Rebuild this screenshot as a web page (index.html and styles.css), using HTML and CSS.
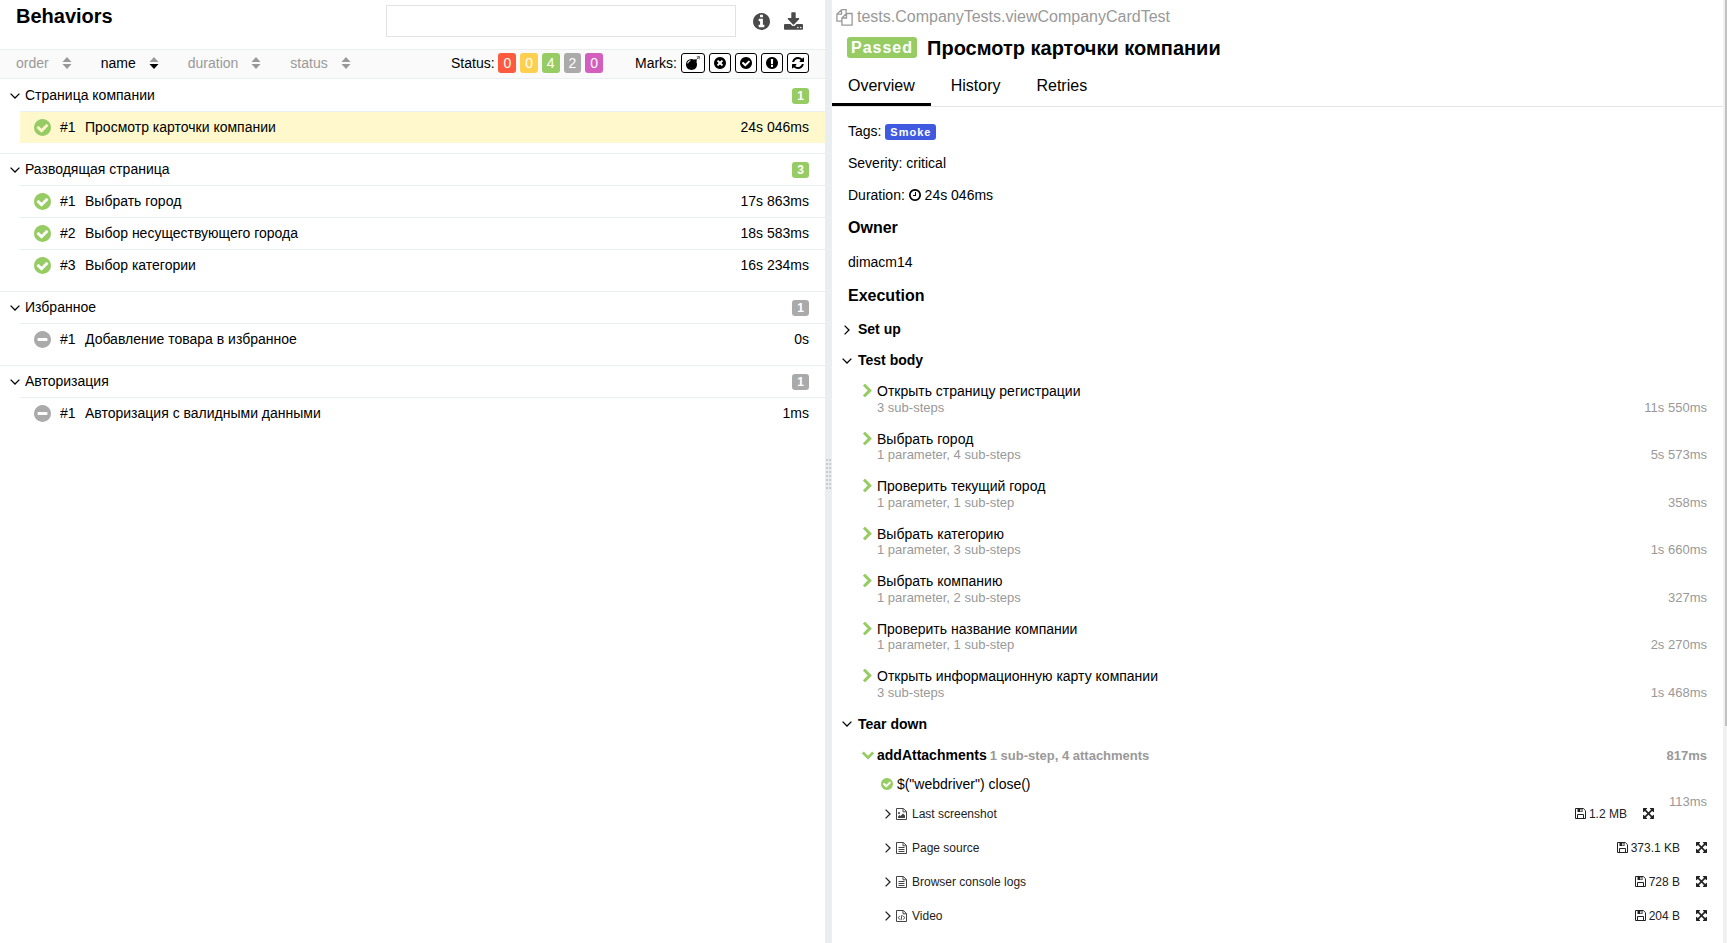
FILE: index.html
```
<!DOCTYPE html>
<html lang="ru">
<head>
<meta charset="utf-8">
<title>Behaviors</title>
<link rel="stylesheet" href="styles.css">
</head>
<body>
<svg class="sprite" aria-hidden="true">
  <symbol id="check" viewBox="128 128 1536 1536"><path d="M1412 734q0-28-18-46l-91-90q-19-19-45-19t-45 19l-408 407-226-226q-19-19-45-19t-45 19l-91 90q-18 18-18 46 0 27 18 45l362 362q19 19 45 19 27 0 46-19l543-543q18-18 18-45zm252 162q0 209-103 385.5t-279.5 279.5-385.5 103-385.5-103-279.5-279.5-103-385.5 103-385.5 279.5-279.5 385.5-103 385.5 103 279.5 279.5 103 385.5z"/></symbol>
  <symbol id="cross" viewBox="128 128 1536 1536"><path d="M1277 1122q0-26-19-45l-181-181 181-181q19-19 19-45 0-27-19-46l-90-90q-19-19-46-19-26 0-45 19l-181 181-181-181q-19-19-45-19-27 0-46 19l-90 90q-19 19-19 46 0 26 19 45l181 181-181 181q-19 19-19 45 0 27 19 46l90 90q19 19 46 19 26 0 45-19l181-181 181 181q19 19 45 19 27 0 46-19l90-90q19-19 19-46zm387-226q0 209-103 385.5t-279.5 279.5-385.5 103-385.5-103-279.5-279.5-103-385.5 103-385.5 279.5-279.5 385.5-103 385.5 103 279.5 279.5 103 385.5z"/></symbol>
  <symbol id="minus" viewBox="128 128 1536 1536"><path d="M1344 960v-128q0-26-19-45t-45-19h-768q-26 0-45 19t-19 45v128q0 26 19 45t45 19h768q26 0 45-19t19-45zm320-64q0 209-103 385.5t-279.5 279.5-385.5 103-385.5-103-279.5-279.5-103-385.5 103-385.5 279.5-279.5 385.5-103 385.5 103 279.5 279.5 103 385.5z"/></symbol>
  <symbol id="exclaim" viewBox="128 128 1536 1536"><path d="M896 128q209 0 385.5 103t279.5 279.5 103 385.5-103 385.5-279.5 279.5-385.5 103-385.5-103-279.5-279.5-103-385.5 103-385.5 279.5-279.5 385.5-103zm128 1247v-190q0-14-9-23.5t-22-9.5h-192q-13 0-23 10t-10 23v190q0 13 10 23t23 10h192q13 0 22-9.5t9-23.5zm-2-344l18-621q0-12-10-18-10-8-24-8h-220q-14 0-24 8-10 6-10 18l17 621q0 10 10 17.5t24 7.5h185q14 0 23.5-7.5t10.5-17.5z"/></symbol>
  <symbol id="info" viewBox="128 128 1536 1536"><path d="M1152 1376v-160q0-14-9-23t-23-9h-96v-512q0-14-9-23t-23-9h-320q-14 0-23 9t-9 23v160q0 14 9 23t23 9h96v320h-96q-14 0-23 9t-9 23v160q0 14 9 23t23 9h448q14 0 23-9t9-23zm-128-896v-160q0-14-9-23t-23-9h-192q-14 0-23 9t-9 23v160q0 14 9 23t23 9h192q14 0 23-9t9-23zm640 416q0 209-103 385.5t-279.5 279.5-385.5 103-385.5-103-279.5-279.5-103-385.5 103-385.5 279.5-279.5 385.5-103 385.5 103 279.5 279.5 103 385.5z"/></symbol>
  <symbol id="download" viewBox="64 0 1664 1536"><path d="M1344 1344q0-26-19-45t-45-19-45 19-19 45 19 45 45 19 45-19 19-45zm256 0q0-26-19-45t-45-19-45 19-19 45 19 45 45 19 45-19 19-45zm128-224v320q0 40-28 68t-68 28h-1472q-40 0-68-28t-28-68v-320q0-40 28-68t68-28h465l135 136q58 56 136 56t136-56l136-136h464q40 0 68 28t28 68zm-325-569q17 41-14 70l-448 448q-18 19-45 19t-45-19l-448-448q-31-29-14-70 17-39 59-39h256v-448q0-26 19-45t45-19h256q26 0 45 19t19 45v448h256q42 0 59 39z"/></symbol>
  <symbol id="refresh" viewBox="128 128 1536 1536"><path d="M1639 1056q0 5-1 7-64 268-268 434.500t-478 166.500q-146 0-282.500-55t-243.500-157l-129 129q-19 19-45 19t-45-19-19-45v-448q0-26 19-45t45-19h448q26 0 45 19t19 45-19 45l-137 137q71 66 161 102t187 36q134 0 250-65t186-179q11-17 53-117 8-23 30-23h192q13 0 22.500 9.500t9.500 22.500zm25-800v448q0 26-19 45t-45 19h-448q-26 0-45-19t-19-45 19-45l138-138q-148-137-349-137-134 0-250 65t-186 179q-11 17-53 117-8 23-30 23h-199q-13 0-22.500-9.500t-9.500-22.500v-7q65-268 270-434.500t480-166.500q146 0 284 55.500t245 156.500l130-129q19-19 45-19t45 19 19 45z"/></symbol>
  <symbol id="bomb" viewBox="0 0 1792 1792"><path d="M571 589q-10-25-34-35t-49 0q-108 44-191 127t-127 191q-10 25 0 49t35 34q13 5 24 5 42 0 60-40 34-84 98.500-148.500t148.500-98.500q25-11 35-35t0-49zm942-356l46 46-244 243 68 68q19 19 19 45.500t-19 45.500l-64 64q89 161 89 343 0 143-55.500 273.500t-150 225-225 150-273.500 55.500-273.500-55.500-225-150-150-225-55.500-273.500 55.500-273.500 150-225 225-150 273.500-55.500q182 0 343 89l64-64q19-19 45.500-19t45.500 19l68 68zm8-56q-10 10-22 10-13 0-23-10l-91-90q-9-10-9-23t9-23q10-9 23-9t23 9l90 91q10 9 10 22.500t-10 22.500zm230 230q-11 9-23 9t-23-9l-90-91q-10-9-10-22.500t10-22.500q9-10 22.500-10t22.500 10l91 90q9 10 9 23t-9 23zm41-183q0 14-9 23t-23 9h-96q-14 0-23-9t-9-23 9-23 23-9h96q14 0 23 9t9 23zm-192-192v96q0 14-9 23t-23 9-23-9-9-23v-96q0-14 9-23t23-9 23 9 9 23zm151 55l-91 90q-10 10-22 10-13 0-23-10-10-9-10-22.500t10-22.500l90-91q10-9 23-9t23 9q9 10 9 23t-9 23z"/></symbol>
  <symbol id="clock" viewBox="128 128 1536 1536"><path d="M1024 544v448q0 14-9 23t-23 9h-320q-14 0-23-9t-9-23v-64q0-14 9-23t23-9h224v-352q0-14 9-23t23-9h64q14 0 23 9t9 23zm416 352q0-148-73-273t-198-198-273-73-273 73-198 198-73 273 73 273 198 198 273 73 273-73 198-198 73-273zm224 0q0 209-103 385.500t-279.500 279.500-385.500 103-385.500-103-279.500-279.500-103-385.500 103-385.500 279.500-279.500 385.500-103 385.500 103 279.500 279.500 103 385.500z"/></symbol>
  <symbol id="chevron-right" viewBox="346 100 1060 1560"><path d="M1363 877l-742 742q-19 19-45 19t-45-19l-166-166q-19-19-19-45t19-45l531-531-531-531q-19-19-19-45t19-45l166-166q19-19 45-19t45 19l742 742q19 19 19 45t-19 45z" transform="translate(0 48)"/></symbol>
  <symbol id="chevron-down" viewBox="90 460 1612 1160"><path d="M1683 808l-742 741q-19 19-45 19t-45-19l-742-741q-19-19-19-45.500t19-45.500l166-165q19-19 45-19t45 19l531 531 531-531q19-19 45-19t45 19l166 165q19 19 19 45.500t-19 45.500z"/></symbol>
  <symbol id="expand" viewBox="128 128 1536 1536"><path d="M1411 541l-355 355 355 355 144-144q29-31 70-14 39 17 39 59v448q0 26-19 45t-45 19h-448q-42 0-59-40-17-39 14-69l144-144-355-355-355 355 144 144q31 30 14 69-17 40-59 40h-448q-26 0-45-19t-19-45v-448q0-42 40-59 39-17 69 14l144 144 355-355-355-355-144 144q-19 19-45 19-12 0-24-5-40-17-40-59v-448q0-26 19-45t45-19h448q42 0 59 40 17 39-14 69l-144 144 355 355 355-355-144-144q-31-30-14-69 17-40 59-40h448q26 0 45 19t19 45v448q0 42-39 59-13 5-25 5-26 0-45-19z"/></symbol>
  <symbol id="angle-down" viewBox="0 0 10 6"><path class="line" d="M.6.6 5 5 9.400.6"/></symbol>
  <symbol id="angle-right" viewBox="0 0 6 10"><path class="line" d="M.6.6 5 5 .6 9.400"/></symbol>
  <symbol id="sort-up" viewBox="0 0 10 12"><path d="M5 0 9.500 5h-9z"/></symbol>
  <symbol id="sort-down" viewBox="0 0 10 12"><path d="M5 12 .5 7h9z"/></symbol>
  <symbol id="copy" viewBox="0 0 17 17"><path class="line" d="M5.500.7h4.600v3M5.500.7v4.400H.9v7h4.800M5.500.7.9 5.100M10.500 4.500h5.600v11.600H5.900V9zM10.500 4.500V9H5.900"/></symbol>
  <symbol id="floppy" viewBox="0 0 11 11"><path class="thin" d="M.5.5h7.800l2.200 2.200v7.800H.5zM2.500 10.500v-4h6v4"/><path d="M2.500.5h5v3.600h-5zm2.700.7v2.200h1.400V1.200z"/></symbol>
  <symbol id="file-image" viewBox="0 0 11 12"><path class="thin" d="M.5.5h6.800l3.200 3v8H.5zM7 .5v3.300h3.500"/><path d="M2 10V8.500L3.500 7l1 1 2.500-2.500 2 2V10z"/><circle cx="3" cy="5" r="1.100"/></symbol>
  <symbol id="file-text" viewBox="0 0 11 12"><path class="thin" d="M.5.5h6.800l3.200 3v8H.5zM7 .5v3.300h3.500M2.500 5.500h6M2.500 7.500h6M2.500 9.500h6"/></symbol>
  <symbol id="file-code" viewBox="0 0 11 12"><path class="thin" d="M.5.5h6.800l3.200 3v8H.5zM7 .5v3.300h3.500M3.800 5.800 2.300 7.700l1.500 1.900M7.200 5.800l1.500 1.900-1.500 1.900M6 5 5 10.200"/></symbol>
</svg>
<div class="app">
  <section class="tree">
    <header class="tree-head">
      <h1 class="tree-title">Behaviors</h1>
      <input class="search" type="search" aria-label="Search">
      <button class="tool" aria-label="Info"><svg class="i17"><use href="#info"/></svg></button>
      <button class="tool" aria-label="Download"><svg class="i-download"><use href="#download"/></svg></button>
    </header>
    <div class="controls">
      <div class="sorters">
        <button class="sorter">order<svg class="i-sort"><use href="#sort-up"/><use href="#sort-down"/></svg></button>
        <button class="sorter sorter-on">name<svg class="i-sort"><use class="muted" href="#sort-up"/><use href="#sort-down"/></svg></button>
        <button class="sorter">duration<svg class="i-sort"><use href="#sort-up"/><use href="#sort-down"/></svg></button>
        <button class="sorter">status<svg class="i-sort"><use href="#sort-up"/><use href="#sort-down"/></svg></button>
      </div>
      <div class="statuses">Status:
        <button class="count failed">0</button>
        <button class="count broken">0</button>
        <button class="count passed">4</button>
        <button class="count skipped">2</button>
        <button class="count unknown">0</button>
      </div>
      <div class="marks"><span>Marks:</span>
        <button class="mark mark-wide" aria-label="Flaky"><svg class="i14"><use href="#bomb"/></svg></button>
        <button class="mark" aria-label="New failed"><svg class="i12"><use href="#cross"/></svg></button>
        <button class="mark" aria-label="New passed"><svg class="i12"><use href="#check"/></svg></button>
        <button class="mark" aria-label="New broken"><svg class="i12"><use href="#exclaim"/></svg></button>
        <button class="mark" aria-label="Retries status change"><svg class="i12"><use href="#refresh"/></svg></button>
      </div>
    </div>
    <div class="groups">
      <div class="group">
        <div class="group-head"><svg class="i-down"><use href="#angle-down"/></svg><span class="grow">Страница компании</span><span class="badge passed">1</span></div>
        <div class="leaf leaf-on"><svg class="i17 ok"><use href="#check"/></svg><span class="num">#1</span><span class="grow">Просмотр карточки компании</span><span>24s 046ms</span></div>
      </div>
      <div class="group">
        <div class="group-head"><svg class="i-down"><use href="#angle-down"/></svg><span class="grow">Разводящая страница</span><span class="badge passed">3</span></div>
        <div class="leaf"><svg class="i17 ok"><use href="#check"/></svg><span class="num">#1</span><span class="grow">Выбрать город</span><span>17s 863ms</span></div>
        <div class="leaf"><svg class="i17 ok"><use href="#check"/></svg><span class="num">#2</span><span class="grow">Выбор несуществующего города</span><span>18s 583ms</span></div>
        <div class="leaf"><svg class="i17 ok"><use href="#check"/></svg><span class="num">#3</span><span class="grow">Выбор категории</span><span>16s 234ms</span></div>
      </div>
      <div class="group">
        <div class="group-head"><svg class="i-down"><use href="#angle-down"/></svg><span class="grow">Избранное</span><span class="badge skipped">1</span></div>
        <div class="leaf"><svg class="i17 skip"><use href="#minus"/></svg><span class="num">#1</span><span class="grow">Добавление товара в избранное</span><span>0s</span></div>
      </div>
      <div class="group">
        <div class="group-head"><svg class="i-down"><use href="#angle-down"/></svg><span class="grow">Авторизация</span><span class="badge skipped">1</span></div>
        <div class="leaf"><svg class="i17 skip"><use href="#minus"/></svg><span class="num">#1</span><span class="grow">Авторизация с валидными данными</span><span>1ms</span></div>
      </div>
    </div>
  </section>
  <div class="gutter"><div class="grip"></div></div>
  <section class="detail">
    <div class="detail-main">
      <div class="path"><svg class="i17"><use href="#copy"/></svg><span>tests.CompanyTests.viewCompanyCardTest</span></div>
      <h2 class="case-title"><span class="label label-big passed">Passed</span><span>Просмотр карточки компании</span></h2>
      <nav class="tabs">
        <a class="tab tab-on" href="#overview">Overview</a>
        <a class="tab" href="#history">History</a>
        <a class="tab" href="#retries">Retries</a>
      </nav>
      <div class="overview" id="overview">
        <div class="fact">Tags: <span class="label tag">Smoke</span></div>
        <div class="fact">Severity: critical</div>
        <div class="fact">Duration: <svg class="i12 inline"><use href="#clock"/></svg> 24s 046ms</div>
        <h3 class="heading">Owner</h3>
        <div class="owner">dimacm14</div>
        <h3 class="heading">Execution</h3>
        <div class="stages">
          <div class="stage"><span class="stage-icon"><svg class="i-right"><use href="#angle-right"/></svg></span>Set up</div>
          <div class="stage"><span class="stage-icon"><svg class="i-down"><use href="#angle-down"/></svg></span>Test body</div>
          <div class="step"><svg class="i-chev ok"><use href="#chevron-right"/></svg><div class="grow"><div class="step-name">Открыть страницу регистрации</div><div class="meta"><span>3 sub-steps</span><span>11s 550ms</span></div></div></div>
          <div class="step"><svg class="i-chev ok"><use href="#chevron-right"/></svg><div class="grow"><div class="step-name">Выбрать город</div><div class="meta"><span>1 parameter, 4 sub-steps</span><span>5s 573ms</span></div></div></div>
          <div class="step"><svg class="i-chev ok"><use href="#chevron-right"/></svg><div class="grow"><div class="step-name">Проверить текущий город</div><div class="meta"><span>1 parameter, 1 sub-step</span><span>358ms</span></div></div></div>
          <div class="step"><svg class="i-chev ok"><use href="#chevron-right"/></svg><div class="grow"><div class="step-name">Выбрать категорию</div><div class="meta"><span>1 parameter, 3 sub-steps</span><span>1s 660ms</span></div></div></div>
          <div class="step"><svg class="i-chev ok"><use href="#chevron-right"/></svg><div class="grow"><div class="step-name">Выбрать компанию</div><div class="meta"><span>1 parameter, 2 sub-steps</span><span>327ms</span></div></div></div>
          <div class="step"><svg class="i-chev ok"><use href="#chevron-right"/></svg><div class="grow"><div class="step-name">Проверить название компании</div><div class="meta"><span>1 parameter, 1 sub-step</span><span>2s 270ms</span></div></div></div>
          <div class="step"><svg class="i-chev ok"><use href="#chevron-right"/></svg><div class="grow"><div class="step-name">Открыть информационную карту компании</div><div class="meta"><span>3 sub-steps</span><span>1s 468ms</span></div></div></div>
          <div class="stage"><span class="stage-icon"><svg class="i-down"><use href="#angle-down"/></svg></span>Tear down</div>
          <div class="open-step"><svg class="i-chev-down ok"><use href="#chevron-down"/></svg><span>addAttachments</span><span class="meta grow"><span>1 sub-step, 4 attachments</span><span>817ms</span></span></div>
          <div class="nested">
            <span class="nested-time">113ms</span>
            <div class="nested-name"><svg class="i12 inline ok"><use href="#check"/></svg> $("webdriver") close()</div>
            <div class="file"><svg class="i-right"><use href="#angle-right"/></svg><svg class="i-file"><use href="#file-image"/></svg><span class="grow">Last screenshot</span><a class="size" href="#file"><svg class="i11"><use href="#floppy"/></svg>1.2 MB</a><button class="tool" aria-label="Expand"><svg class="i11"><use href="#expand"/></svg></button></div>
            <div class="file"><svg class="i-right"><use href="#angle-right"/></svg><svg class="i-file"><use href="#file-text"/></svg><span class="grow">Page source</span><a class="size" href="#file"><svg class="i11"><use href="#floppy"/></svg>373.1 KB</a><button class="tool" aria-label="Expand"><svg class="i11"><use href="#expand"/></svg></button></div>
            <div class="file"><svg class="i-right"><use href="#angle-right"/></svg><svg class="i-file"><use href="#file-text"/></svg><span class="grow">Browser console logs</span><a class="size" href="#file"><svg class="i11"><use href="#floppy"/></svg>728 B</a><button class="tool" aria-label="Expand"><svg class="i11"><use href="#expand"/></svg></button></div>
            <div class="file"><svg class="i-right"><use href="#angle-right"/></svg><svg class="i-file"><use href="#file-code"/></svg><span class="grow">Video</span><a class="size" href="#file"><svg class="i11"><use href="#floppy"/></svg>204 B</a><button class="tool" aria-label="Expand"><svg class="i11"><use href="#expand"/></svg></button></div>
          </div>
        </div>
      </div>
    </div>
    <div class="scroll"><div class="thumb"></div></div>
  </section>
</div>
</body>
</html>
```
FILE: styles.css
```
* { box-sizing: border-box; }
body { margin: 0; font: 14px/20px "Liberation Sans", Arial, sans-serif; color: #000; background: #fff; }
h1, h2, h3 { margin: 0; }
button { margin: 0; padding: 0; border: 0; background: none; font: inherit; color: inherit; cursor: pointer; }
a { color: inherit; text-decoration: none; }
svg { display: block; flex: none; fill: currentColor; }
.sprite { position: absolute; top: 0; left: 0; width: 0; height: 0; }
.line { fill: none; stroke: currentColor; stroke-width: 1.300; }
.thin { fill: none; stroke: currentColor; stroke-width: 1; }
.grow { flex: 1; min-width: 0; }

.i11 { width: 11px; height: 11px; }
.i12 { width: 12px; height: 12px; }
.i14 { width: 14px; height: 14px; }
.i17 { width: 17px; height: 17px; }
.i-download { width: 19px; height: 18px; }
.i-sort { width: 10px; height: 12px; }
.i-down { width: 10px; height: 6px; }
.i-right { width: 6px; height: 10px; }
.i-chev { width: 9px; height: 13px; }
.i-chev-down { width: 12px; height: 9px; }
.i-file { width: 11px; height: 12px; }
.inline { display: inline-block; vertical-align: -1px; }
.ok { color: #97cc64; }
.skip { color: #aaa; }
.muted { color: #999; }

.passed { background: #97cc64; }
.failed { background: #fd5a3e; }
.broken { background: #ffd050; }
.skipped { background: #aaa; }
.unknown { background: #d35ebe; }

.app { display: grid; grid-template-columns: minmax(0, 165fr) 7px minmax(0, 179fr); min-height: 100vh; }

.tree-head { display: flex; align-items: center; padding: 5px 22px 12px 16px; color: #4a4a4a; }
.tree-title { flex: 1; font-size: 20px; line-height: 20px; padding-bottom: 10px; color: #000; }
.search { width: 350px; height: 32px; margin-right: 17px; padding: 0 8px; border: 1px solid #e2e2e2; border-radius: 0; background: #fff; font: inherit; appearance: none; }
.tool + .tool { margin-left: 14px; }

.controls { display: flex; align-items: center; padding: 3px 16px 5px; border-top: 1px solid #eceff1; border-bottom: 1px solid #eceff1; background: #fafafa; }
.sorters { display: flex; flex: 1; gap: 29px; }
.sorter { display: flex; align-items: center; gap: 13px; color: #999; }
.sorter-on { color: #000; }
.count { height: 20px; padding: 0 5px; border-radius: 3px; line-height: 20px; color: #fff; }
.marks { display: flex; align-items: center; gap: 4px; margin-left: 32px; }
.mark { display: flex; align-items: center; justify-content: center; width: 22px; height: 20px; border: 1px solid #000; border-radius: 3px; background: #fff; }
.mark-wide { width: 24px; }

.groups { line-height: 31px; }
.group { padding-bottom: 10px; border-top: 1px solid #eceff1; }
.group:first-child { border-top-color: transparent; }
.group-head { display: flex; align-items: center; gap: 5px; padding: 0 16px 0 10px; }
.badge { padding: 0 5px; border-radius: 3px; font-size: 12px; font-weight: bold; line-height: 16px; color: #fff; }
.leaf { display: flex; align-items: center; margin-left: 20px; padding: 0 16px 0 14px; border-top: 1px solid #eceff1; }
.leaf-on { background: #fff8cd; }
.num { width: 25px; margin-left: 9px; }

.gutter { display: flex; align-items: center; justify-content: center; padding-top: 4px; background: #e9eef1; }
.grip { width: 5px; height: 30px; background: repeating-linear-gradient(90deg, transparent 0 2px, #e9eef1 2px 3px), repeating-linear-gradient(#c8ccce 0 2px, #e9eef1 2px 4px); }

.detail { display: flex; }
.detail-main { flex: 1; min-width: 0; }
.path { display: flex; align-items: center; gap: 4px; padding: 7px 4px 0; font-size: 16px; color: #999; }
.case-title { display: flex; align-items: center; gap: 10px; height: 41px; padding-left: 15px; font-size: 20px; }
.label { border-radius: 3px; font-weight: bold; letter-spacing: 1px; color: #fff; }
.label-big { padding: 0 4px; font-size: 16px; line-height: 21px; }
.tag { display: inline-block; padding: 0 5px; font-size: 11px; line-height: 16px; background: #3f5ae0; }
.tabs { display: flex; gap: 4px; border-bottom: 1px solid #e5e5e5; font-size: 16px; line-height: 35px; }
.tab { padding: 0 16px; border-bottom: 3px solid transparent; }
.tab-on { border-bottom-color: #000; }

.overview { padding: 8px 16px 0; }
.fact { line-height: 32px; }
.heading { font-size: 16px; line-height: 34px; }
.owner { line-height: 34px; }
.stages { padding-top: 1px; }
.stage { display: flex; align-items: center; font-weight: bold; line-height: 31px; }
.stage-icon { display: flex; justify-content: center; width: 10px; margin: 0 6px 0 -6px; }
.step { display: flex; gap: 5px; padding: 7px 0 10px 15px; }
.step .i-chev { margin-top: 1px; }
.step-name { line-height: 1.250; }
.meta { display: flex; justify-content: space-between; font-size: 13px; line-height: 13px; color: #999; }
.open-step { display: flex; align-items: center; gap: 3px; height: 31px; padding-left: 14px; font-weight: bold; }
.nested { padding-left: 33px; }
.nested-time { float: right; margin: 23px 0 0 15px; font-size: 13px; line-height: 15px; color: #999; }
.nested-name { line-height: 26px; }
.file { display: flex; align-items: center; height: 34px; padding-left: 4px; font-size: 12px; color: #222; }
.file .i-file { margin: 0 5px; color: #444; }
.size { display: flex; align-items: center; gap: 3px; margin-right: 16px; }

.scroll { width: 4px; padding-left: 2px; background: #f1f1f1; }
.thumb { height: 77vh; background: #c1c1c1; }
```
